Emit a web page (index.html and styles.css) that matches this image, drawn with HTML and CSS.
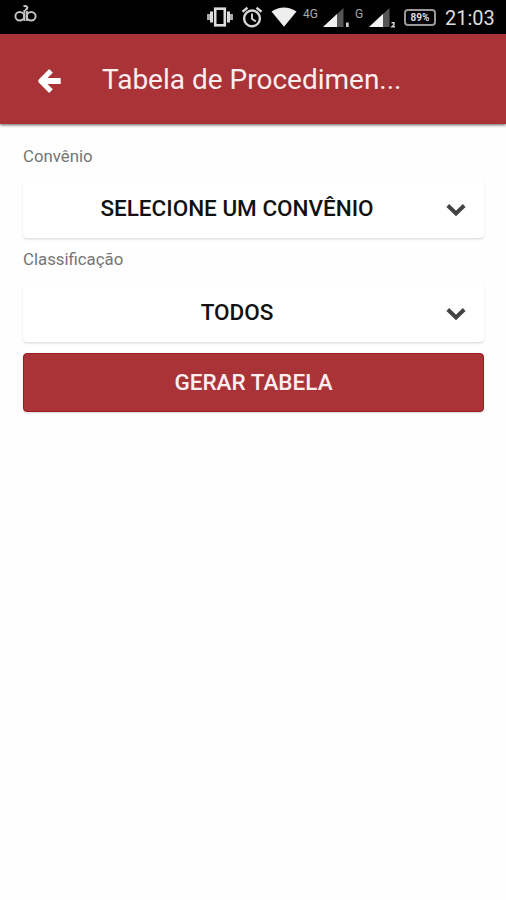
FILE: index.html
```html
<!DOCTYPE html>
<html lang="pt-BR">
<head>
<meta charset="utf-8">
<title>Tabela de Procedimentos</title>
<link rel="stylesheet" href="styles.css">
</head>
<body>
<div class="status">
  <svg class="logo" width="24" height="20" viewBox="0 0 24 20" fill="none" stroke="#c4c4c4" stroke-width="2"><ellipse cx="5.8" cy="11.3" rx="4.400" ry="4.200"/><ellipse cx="17.2" cy="11.3" rx="4.400" ry="4.200"/><path d="M10.400 16V5M13 16V6M9.500 1.300C14 0 14.500 4 11 5"/></svg>
  <svg class="vibrate" width="26" height="20" viewBox="0 0 26 20" fill="none" stroke="#ddd"><rect x="8.200" y="1.700" width="9.600" height="16.600" stroke-width="2.600"/><path d="M4.500 4.500v11M21.500 4.500v11" stroke-width="3"/><path d="M1.500 7v6M24.500 7v6" stroke-width="3" stroke="#aaa"/></svg>
  <svg class="alarm" width="22" height="22" viewBox="0 0 22 22" fill="none" stroke="#d6d6d6" stroke-width="2.400"><circle cx="11" cy="12.400" r="7.900"/><path d="M11 7.500v5.200l3.800 2.800" stroke-width="1.900"/><path d="M1.500 5.700l5-4M20.500 5.700l-5-4"/></svg>
  <svg class="wifi" width="26" height="20" viewBox="0 0 26 20"><path d="M.5 4.500Q13-3.500 25.500 4.500L13 19.700z" fill="#eee"/></svg>
  <span class="net net-4g">4G</span>
  <svg class="signal" width="27" height="20" viewBox="0 0 27 20"><path d="M0 19L20.500 0v19z" fill="#555"/><path d="M0 19L14 6v13z" fill="#f2f2f2"/><path d="M23 14.500h2.700v4.500h-2.700z" fill="#ccc"/></svg>
  <span class="net net-g">G</span>
  <svg class="signal2" width="27" height="20" viewBox="0 0 27 20"><path d="M0 19L20.500 0v19z" fill="#555"/><path d="M0 19L14 6v13z" fill="#f2f2f2"/><path d="M22.500 14.700h2.500v2l-2 2h3" fill="none" stroke="#ccc" stroke-width="1.500"/></svg>
  <span class="battery">89%</span>
  <span class="time">21:03</span>
</div>
<header class="bar">
  <svg class="back" width="24" height="26" viewBox="0 0 24 26" fill="none" stroke="#fff" stroke-width="6" stroke-linejoin="round"><path d="M14 2.800L3.800 13l10.200 10.200" stroke-width="5.200"/><path d="M5 13h18.700"/></svg>
  <h1 class="title">Tabela de Procedimen...</h1>
</header>
<main class="content">
  <label class="label">Convênio</label>
  <div class="select"><span class="value">SELECIONE UM CONVÊNIO</span><svg class="chevron" width="20" height="14" viewBox="0 0 20 14" fill="none" stroke="#444" stroke-width="4"><path d="M1.800 2.500L10 10.500l8.200-8"/></svg></div>
  <label class="label second">Classificação</label>
  <div class="select lower"><span class="value">TODOS</span><svg class="chevron" width="20" height="14" viewBox="0 0 20 14" fill="none" stroke="#444" stroke-width="4"><path d="M1.800 2.500L10 10.500l8.200-8"/></svg></div>
  <button class="submit">GERAR TABELA</button>
</main>
</body>
</html>
```
FILE: styles.css
```css
* { box-sizing: border-box; }
body {
  margin: 0;
  height: 900px;
  background: #fefefe;
  font-family: Roboto, "Liberation Sans", sans-serif;
  overflow: hidden;
}
.status {
  height: 34px;
  background: #000;
  display: flex;
  align-items: flex-start;
  color: #ddd;
}
.status > * { flex: none; }
.logo { margin: 5px 0 0 14px; }
.vibrate { margin: 7px 0 0 169px; }
.alarm { margin: 6px 0 0 8px; }
.wifi { margin: 7px 0 0 8px; }
.net {
  font-size: 12px;
  line-height: 12px;
  margin-top: 8px;
  color: #aaa;
}
.net-4g { width: 20px; margin-left: 6px; }
.signal { margin-top: 8px; }
.net-g { width: 10px; margin-left: 5px; }
.signal2 { margin: 8px 0 0 4px; }
.battery {
  width: 32px;
  height: 17px;
  margin: 9px 0 0 8px;
  border: 2px solid #999;
  border-radius: 4px;
  font-size: 10px;
  font-weight: 700;
  line-height: 13px;
  text-align: center;
}
.time {
  margin: 6px 0 0 9px;
  font-size: 20px;
  line-height: 24px;
}
.bar {
  height: 90px;
  background: #aa3338;
  display: flex;
  align-items: center;
  box-shadow: 0 1px 3px rgba(0, 0, 0, .65);
}
.back { margin: 4px 0 0 37px; }
.title {
  margin: 2px 0 0 41px;
  color: #fbeeee;
  font-size: 28px;
  font-weight: 400;
  line-height: 36px;
  white-space: nowrap;
}
.content { padding: 22px 22px 0 23px; }
.label {
  display: block;
  height: 20px;
  font-size: 16.8px;
  line-height: 20px;
  color: #757575;
}
.second { margin-top: 11px; }
.select {
  display: flex;
  align-items: center;
  height: 60px;
  margin-top: 12px;
  padding: 0 18px 0 0;
  border-radius: 4px;
  background: #fff;
  box-shadow: 0 2px 2px rgba(0, 0, 0, .06), 0 1px 2px rgba(0, 0, 0, .08);
}
.lower { margin-top: 13px; }
.value {
  flex: 1;
  padding: 0 0 1px 5px;
  text-align: center;
  font-size: 22.5px;
  font-weight: 500;
  line-height: 28px;
  color: #111;
}
.chevron { margin-top: 3px; }
.submit {
  display: block;
  width: 461px;
  height: 59px;
  margin-top: 11px;
  padding: 0 0 2px;
  border: 1px solid #9c1a22;
  border-radius: 4px;
  background: #aa3338;
  color: #fbeeee;
  font: 500 22.5px/28px Roboto, "Liberation Sans", sans-serif;
  box-shadow: 0 1px 2px rgba(0, 0, 0, .15);
}
```
